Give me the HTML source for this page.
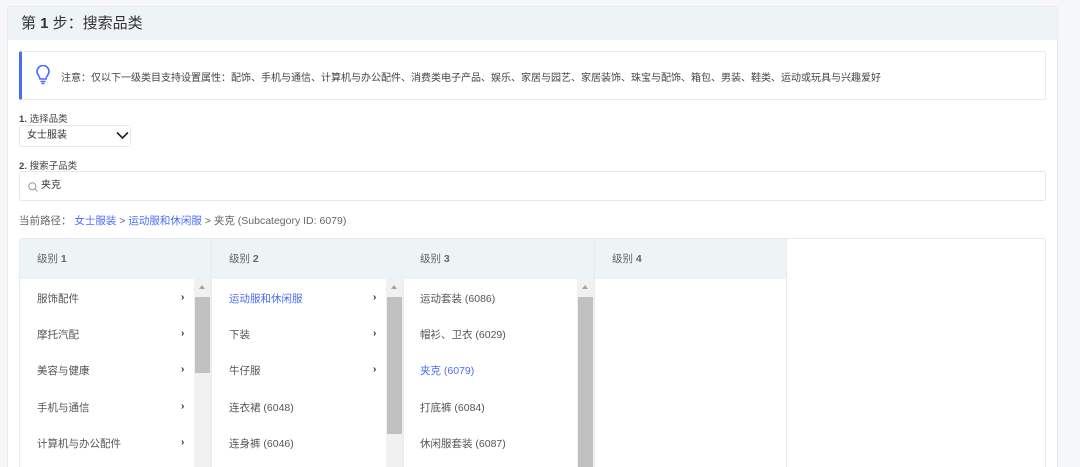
<!DOCTYPE html>
<html><head><meta charset="utf-8"><style>
*{box-sizing:border-box;margin:0;padding:0}
html,body{width:1080px;height:467px;overflow:hidden}
body{background:#f5f7f9;font-family:"Liberation Sans","Noto Sans CJK SC",sans-serif;color:#333;position:relative}
.card{position:absolute;left:7px;top:6px;width:1051px;height:461px;background:#fff;border:1px solid #e6ebef;border-bottom:none;border-radius:3px 3px 0 0;overflow:hidden}
.hd{position:absolute;left:0;top:0;right:0;height:33px;background:#eef3f6;font-size:15px;line-height:33px;padding-left:13px;color:#333}
.abs{position:absolute}
.tip{left:11px;top:44px;width:1027px;height:49px;border:1px solid #e6ebef;border-left:3px solid #4a6cf7;border-radius:2px}
.tip span{position:absolute;left:39px;top:17px;font-size:10px;color:#444}
.lbl{font-size:9.5px;color:#444}
.sel{left:11px;top:118px;width:112px;height:22px;border:1px solid #e3e8ec;border-radius:3px;font-size:10px;line-height:20px;padding-left:7px}
.srch{left:11px;top:164px;width:1027px;height:30px;border:1px solid #e3e8ec;border-radius:3px;font-size:10px;padding-left:21px}
.path{left:11px;top:206px;font-size:10.5px;color:#666}
.path a{color:#4a6cf7}
.tbl{left:11px;top:231px;width:1027px;height:230px;border:1px solid #e6ebef;border-bottom:none;border-radius:3px 3px 0 0;overflow:hidden}
.col{position:absolute;top:0;width:192px;height:230px;border-right:1px solid #e6ebef}
.ch{height:40px;background:#eef3f6;font-size:10.5px;line-height:40px;padding-left:17px;color:#666}
.row{position:absolute;left:17px;font-size:10.5px;color:#555}
.row.b{color:#4a6cf7}
.arr{position:absolute;left:161px;font-size:10px;color:#333;font-weight:bold}
.sb{position:absolute;left:174px;top:40px;width:17px;height:190px;background:#f1f1f1;overflow:hidden}
.sb .t{position:absolute;left:1px;width:15px;top:18px;background:#c1c1c1}
.sb .up{position:absolute;left:5px;top:6px;width:0;height:0;border-left:3.5px solid transparent;border-right:3.5px solid transparent;border-bottom:4px solid #a3a3a3}
</style></head><body>
<div class="card">
<div class="hd">第 <b>1</b> 步：搜索品类</div>
<div class="abs tip">
<svg class="abs" style="left:13px;top:13px" width="16" height="20" viewBox="0 0 16 20"><path d="M5 14 C5 11 2 10 2 6.5 A6 6 0 0 1 14 6.5 C14 10 11 11 11 14 Z" fill="none" stroke="#4a6cf7" stroke-width="1.6"/><path d="M5.5 16.5h5M6.5 18.5h3" stroke="#4a6cf7" stroke-width="1.5"/></svg>
<span>注意：仅以下一级类目支持设置属性：配饰、手机与通信、计算机与办公配件、消费类电子产品、娱乐、家居与园艺、家居装饰、珠宝与配饰、箱包、男装、鞋类、运动或玩具与兴趣爱好</span></div>
<div class="abs lbl" style="left:11px;top:104px"><b>1.</b> 选择品类</div>
<div class="abs sel">女士服装<svg class="abs" style="left:96px;top:5px" width="13" height="9" viewBox="0 0 13 9"><path d="M1 1.5l5.5 5.5 5.5-5.5" fill="none" stroke="#222" stroke-width="1.6"/></svg></div>
<div class="abs lbl" style="left:11px;top:151px"><b>2.</b> 搜索子品类</div>
<div class="abs srch" style="line-height:28px"><svg class="abs" style="left:8px;top:10px" width="10" height="10" viewBox="0 0 10 10"><circle cx="4.3" cy="4.3" r="3.5" fill="none" stroke="#999" stroke-width="1"/><path d="M6.8 6.8l2.6 2.6" stroke="#999"/></svg>夹克</div>
<div class="abs path">当前路径： <a>女士服装</a> &gt; <a>运动服和休闲服</a> &gt; 夹克 (Subcategory ID: 6079)</div>
<div class="abs tbl">
<div class="col" style="left:0"><div class="ch">级别 <b>1</b></div>
<div class="row" style="top:52px">服饰配件</div><div class="row" style="top:88px">摩托汽配</div><div class="row" style="top:124px">美容与健康</div><div class="row" style="top:161px">手机与通信</div><div class="row" style="top:197px">计算机与办公配件</div>
<div class="arr" style="top:53px">›</div><div class="arr" style="top:89px">›</div><div class="arr" style="top:125px">›</div><div class="arr" style="top:162px">›</div><div class="arr" style="top:198px">›</div>
<div class="sb"><div class="up"></div><div class="t" style="height:76px"></div></div></div>
<div class="col" style="left:192px"><div class="ch">级别 <b>2</b></div>
<div class="row b" style="top:52px">运动服和休闲服</div><div class="row" style="top:88px">下装</div><div class="row" style="top:124px">牛仔服</div><div class="row" style="top:161px">连衣裙 (6048)</div><div class="row" style="top:197px">连身裤 (6046)</div>
<div class="arr" style="top:53px">›</div><div class="arr" style="top:89px">›</div><div class="arr" style="top:125px">›</div>
<div class="sb"><div class="up"></div><div class="t" style="height:137px"></div></div></div>
<div class="col" style="left:383px"><div class="ch">级别 <b>3</b></div>
<div class="row" style="top:52px">运动套装 (6086)</div><div class="row" style="top:88px">帽衫、卫衣 (6029)</div><div class="row b" style="top:124px">夹克 (6079)</div><div class="row" style="top:161px">打底裤 (6084)</div><div class="row" style="top:197px">休闲服套装 (6087)</div>
<div class="sb"><div class="up"></div><div class="t" style="height:172px"></div></div></div>
<div class="col" style="left:575px"><div class="ch">级别 <b>4</b></div></div>
</div>
</div>
</body></html>
